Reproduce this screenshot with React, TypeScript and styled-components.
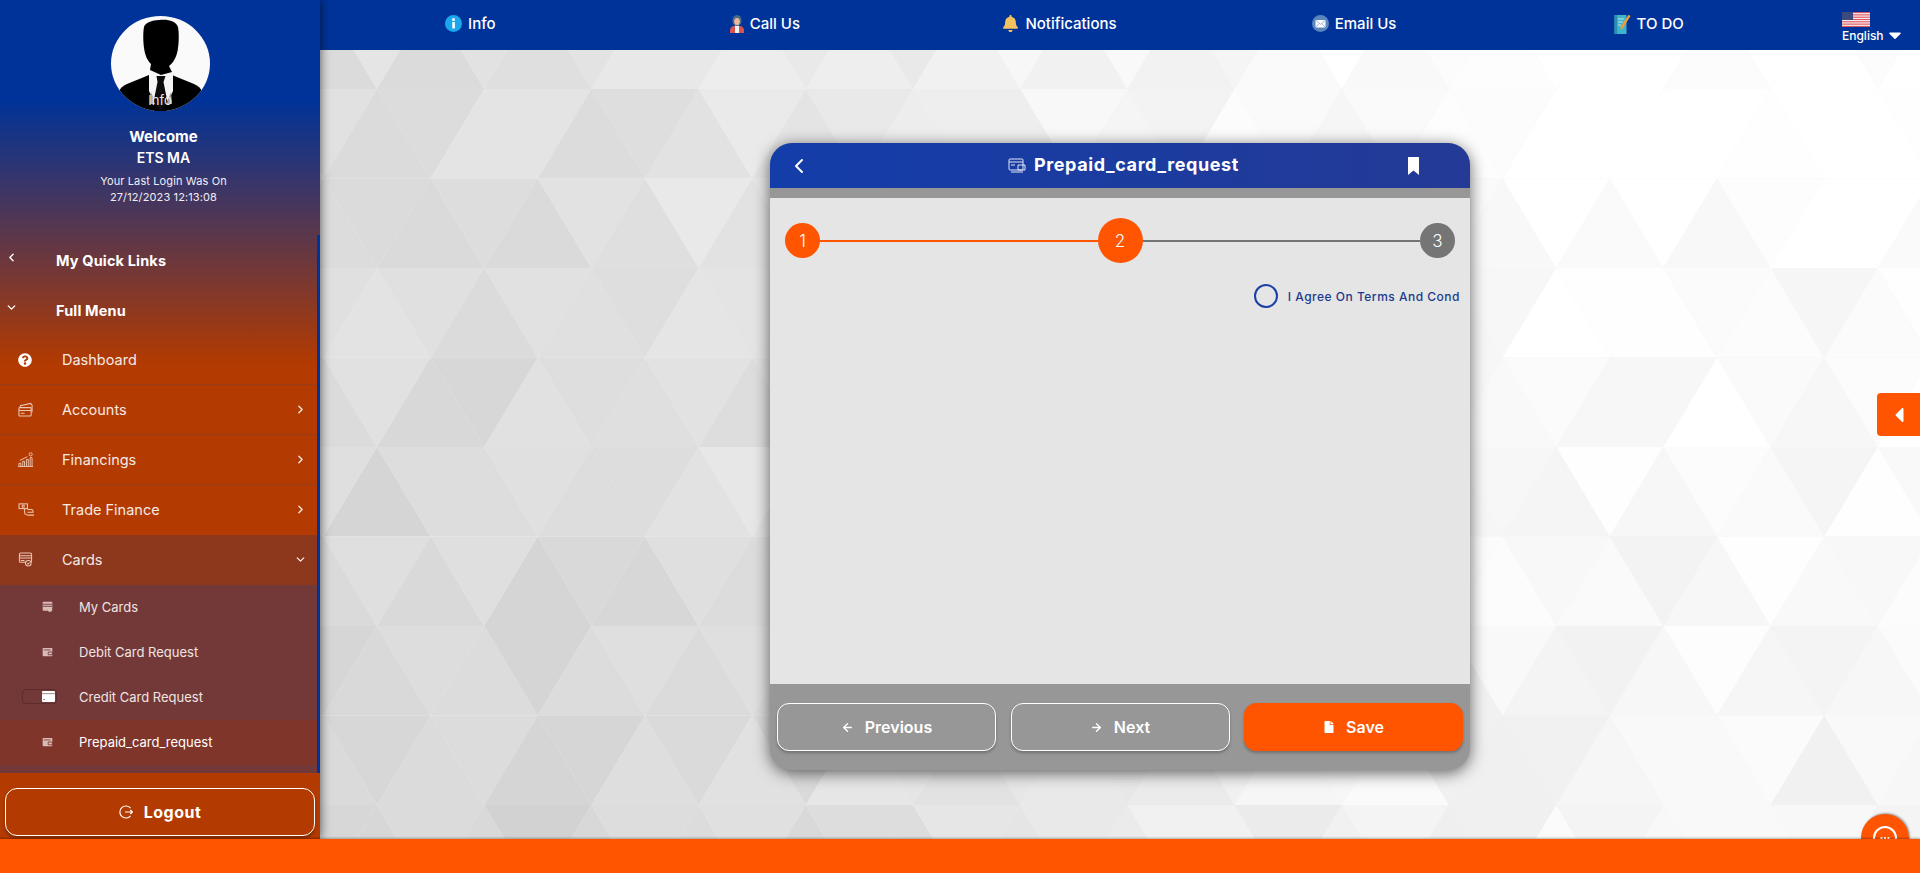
import styled, { createGlobalStyle } from 'styled-components';
import { ChevronLeft, ChevronRight, ChevronDown, ArrowLeft, ArrowRight } from 'lucide-react';
import { FaFile, FaQuestionCircle, FaBell, FaCaretLeft, FaCaretDown } from 'react-icons/fa';

const GlobalStyle = createGlobalStyle`
  html, body { margin: 0; height: 100%; overflow: hidden; }
  body { font-family: Inter, "Open Sans", sans-serif; }
  * { box-sizing: border-box; }
`;

const Page = styled.div`
  width: 1920px;
  height: 873px;
  display: grid;
  grid-template-columns: 320px 1600px;
  grid-template-rows: 839px 34px;
  overflow: hidden;
`;

const Sidebar = styled.aside`
  position: relative;
  z-index: 3;
  display: flex;
  flex-direction: column;
  height: 839px;
  color: #fff;
  background: linear-gradient(180deg, #003399 0, #003399 100px, #b33a00 365px);
  box-shadow: 0 0 10px rgba(0, 0, 0, 0.65);
`;

const Profile = styled.div`
  height: 235px;
  flex: none;
  padding-top: 16px;
  display: flex;
  flex-direction: column;
  align-items: center;
  text-align: center;
`;

const Avatar = styled.div`
  position: relative;
  width: 99px;
  height: 95px;
  border-radius: 50%;
  overflow: hidden;
  background: #fafafa;
`;

const AvatarLabel = styled.span`
  position: absolute;
  left: 0;
  right: 0;
  bottom: 3px;
  font-size: 13px;
  color: #e8e8e8;
`;

const ProfileText = styled.div`
  padding-left: 7px;
`;

const Welcome = styled.div`
  margin-top: 15px;
  font-size: 15px;
  line-height: 21px;
  font-weight: 700;
`;

const Company = styled.div`
  font-size: 14px;
  line-height: 21px;
  font-weight: 600;
`;

const LastLogin = styled.div`
  margin-top: 5px;
  font-size: 11px;
  line-height: 16px;
  letter-spacing: 0.12px;
  color: #f0eef4;
`;

const MenuScroll = styled.div`
  flex: 1;
  min-height: 0;
  overflow: hidden;
  border-right: 3px solid #003399;
  position: relative;
`;

const ScrollThumb = styled.div`
  position: absolute;
  right: -3px;
  top: 453px;
  width: 3px;
  height: 85px;
  background: #e3ab93;
`;

const GroupHead = styled.div`
  height: 50px;
  padding-left: 56px;
  display: flex;
  align-items: center;
  position: relative;
  font-size: 14.5px;
  font-weight: 700;
  letter-spacing: 0.15px;

  svg {
    position: absolute;
    left: 5px;
    top: 16px;
  }
`;

const MenuItem = styled.div<{ $open?: boolean; $rule?: boolean }>`
  height: 50px;
  padding: 0 10px 0 18px;
  display: flex;
  align-items: center;
  font-size: 14.5px;
  color: #f6e9e3;
  background: ${(p) => (p.$open ? '#8d371c' : 'transparent')};
  border-bottom: 1px solid ${(p) => (p.$rule ? '#963d1e' : 'transparent')};
`;

const ItemIcon = styled.span`
  width: 44px;
  flex: none;
  display: flex;
  align-items: center;
  color: #edc7b5;
`;

const ItemLabel = styled.span`
  flex: 1;
`;

const SubMenu = styled.div`
  background: #733838;
  height: 188px;
`;

const SubItem = styled.div<{ $active?: boolean }>`
  height: 45px;
  padding: 0 0 2px 42px;
  display: flex;
  align-items: center;
  font-size: 13px;
  color: ${(p) => (p.$active ? '#fff' : '#f0e4e2')};
  background: ${(p) => (p.$active ? '#80352a' : 'transparent')};
`;

const SubIcon = styled.span`
  width: 37px;
  flex: none;
  display: flex;
  align-items: center;
  color: #d9bcb8;
  position: relative;
`;

const GhostBox = styled.i`
  position: absolute;
  left: -20px;
  top: -2px;
  width: 35px;
  height: 15px;
  border: 1px solid #5f2c2c;
  border-radius: 4px;
`;

const LogoutArea = styled.div`
  height: 66px;
  flex: none;
  padding: 15px 5px 3px;
  background: #b33a00;
`;

const LogoutButton = styled.button`
  width: 310px;
  height: 48px;
  display: flex;
  align-items: center;
  justify-content: center;
  gap: 11px;
  color: #fff;
  font: 700 16px Inter, sans-serif;
  letter-spacing: 0.5px;
  background: #b33a00;
  border: 1px solid #fff;
  border-radius: 12px;
  box-shadow: 0 2px 3px rgba(0, 0, 0, 0.3);
`;

const MainColumn = styled.div`
  display: flex;
  flex-direction: column;
  height: 839px;
  min-width: 0;
`;

const TopBar = styled.header`
  height: 50px;
  flex: none;
  display: grid;
  grid-template-columns: repeat(5, 294.6px) 1fr;
  padding-left: 3px;
  background: #003399;
  color: #fff;
  font-size: 15px;
  font-weight: 500;
`;

const TopLink = styled.div`
  display: flex;
  align-items: center;
  justify-content: center;
  gap: 6px;
  padding-bottom: 3px;
`;

const Language = styled.div`
  padding: 12px 0 0 46px;
  font-size: 12px;
  line-height: 13px;

  span {
    display: flex;
    align-items: center;
    gap: 1px;
    margin-top: -2px;
  }
`;

const Content = styled.main`
  position: relative;
  flex: 1;
  overflow: hidden;
  background: #f2f2f2;
  display: flex;
  justify-content: center;
  padding: 93px 0 0 0;
`;

const Backdrop = styled.svg`
  position: absolute;
  inset: 0;
`;

const Card = styled.section`
  position: relative;
  width: 700px;
  height: 627px;
  display: flex;
  flex-direction: column;
  border-radius: 22px;
  overflow: hidden;
  background: #979797;
  box-shadow: 0 3px 16px rgba(0, 0, 0, 0.6);
`;

const CardHeader = styled.div`
  height: 45px;
  flex: none;
  display: flex;
  align-items: center;
  justify-content: space-between;
  padding: 0 51px 0 17px;
  color: #fff;
  background: linear-gradient(90deg, #133da9, #243a96);
`;

const CardTitle = styled.h1`
  margin: 0 0 2px 28px;
  display: flex;
  align-items: center;
  gap: 8px;
  font-size: 18px;
  font-weight: 700;
  letter-spacing: 0.6px;
`;

const GreyStrip = styled.div`
  height: 10px;
  flex: none;
  background: #979797;
`;

const CardBody = styled.div`
  flex: 1;
  min-height: 0;
  background: #e5e5e5;
  padding: 20px 15px 0;
`;

const Stepper = styled.div`
  height: 45px;
  display: flex;
  align-items: center;
`;

const StepDot = styled.div<{ $size: number; $done: boolean }>`
  width: ${(p) => p.$size}px;
  height: ${(p) => p.$size}px;
  flex: none;
  border-radius: 50%;
  display: flex;
  align-items: center;
  justify-content: center;
  color: #fff;
  font-size: 17px;
  font-weight: 300;
  background: ${(p) => (p.$done ? '#ff5500' : '#757575')};
`;

const StepLine = styled.div<{ $done: boolean }>`
  flex: 1;
  height: 2px;
  background: ${(p) => (p.$done ? '#ff5500' : '#757575')};
`;

const AgreeRow = styled.label`
  margin: 21px -5px 0 0;
  height: 24px;
  display: flex;
  align-items: center;
  justify-content: flex-end;
  gap: 10px;
  font-size: 12px;
  font-weight: 500;
  letter-spacing: 0.5px;
  color: #1c3a8c;
`;

const RadioRing = styled.span`
  width: 24px;
  height: 24px;
  border: 2px solid #1a3fa8;
  border-radius: 50%;
`;

const CardFooter = styled.div`
  height: 86px;
  flex: none;
  display: grid;
  grid-template-columns: repeat(3, 219px);
  column-gap: 14.5px;
  padding: 19px 7px 0;
`;

const FooterButton = styled.button<{ $primary?: boolean }>`
  height: 48px;
  display: flex;
  align-items: center;
  justify-content: center;
  gap: 11px;
  color: #fff;
  font: 600 16px Inter, sans-serif;
  background: ${(p) => (p.$primary ? '#ff5500' : 'transparent')};
  border: 1px solid ${(p) => (p.$primary ? '#ff5500' : '#fff')};
  border-radius: 12px;
  box-shadow: 0 2px 3px rgba(0, 0, 0, 0.25);
`;

const SideTab = styled.div`
  position: absolute;
  right: 0;
  top: 343px;
  width: 43px;
  height: 43px;
  display: flex;
  align-items: center;
  justify-content: center;
  color: #fff;
  background: #ff5500;
  border-radius: 4px 0 0 4px;
  font-size: 24px;
`;

const ChatBubble = styled.div`
  position: absolute;
  left: 1541px;
  top: 764px;
  width: 48px;
  height: 48px;
  display: flex;
  align-items: center;
  justify-content: center;
  background: #ff5500;
  border-radius: 50%;
  box-shadow: 1px -1px 2px rgba(0, 0, 0, 0.35);
`;

const Footer = styled.footer`
  grid-column: 1 / -1;
  position: relative;
  z-index: 4;
  background: #ff5500;
  box-shadow: 0 -1px 2px rgba(0, 0, 0, 0.3);
`;

// triangle lattice behind the card, lighter toward the right
const smooth = (a: number, b: number, x: number) => {
  const t = Math.min(1, Math.max(0, (x - a) / (b - a)));
  return t * t * (3 - 2 * t);
};

const noise = (i: number, j: number) => {
  const s = Math.sin(i * 12.9898 + j * 78.233) * 43758.5453;
  return s - Math.floor(s);
};

const buildTriangles = () => {
  const w = 107.2;
  const h = 89.5;
  const out: { points: string; fill: string }[] = [];
  for (let r = -1; r < 10; r++) {
    const top = 39 + h * (r - 1);
    const shift = r % 2 === 0 ? 3.4 : 57;
    for (let c = -2; c < 17; c++) {
      for (let k = 0; k < 2; k++) {
        const x = shift + c * w;
        const points =
          k === 0
            ? `${x},${top} ${x + w},${top} ${x + w / 2},${top + h}`
            : `${x + w / 2},${top + h} ${x + w},${top} ${x + (3 * w) / 2},${top + h}`;
        const cx = x + (k === 0 ? w / 2 : w);
        const cy = top + h / 2;
        const base = 214 + 31 * smooth(100, 1250, cx) + 11 * (1 - cy / 790);
        const v = Math.min(255, Math.round(base + (noise(r + 3, c * 2 + k + 5) - 0.5) * 12));
        out.push({ points, fill: `rgb(${v},${v},${v})` });
      }
    }
  }
  return out;
};

const triangles = buildTriangles();

const AccountsIcon = () => (
  <svg width="15" height="15" viewBox="0 0 16 16" fill="none" stroke="currentColor" strokeWidth="1.1">
    <rect x="1" y="6" width="13" height="9" rx="1" />
    <path d="M1 9h13M3 12h4M2.500 6V4l11-2.500 1.500 2V11" />
  </svg>
);

const CardsIcon = () => (
  <svg width="15" height="15" viewBox="0 0 16 16" fill="none" stroke="currentColor" strokeWidth="1.1">
    <rect x="1.500" y="1" width="13" height="10" rx="1.500" />
    <path d="M1.500 4h13M1.500 6.500h13M3 9h4" />
    <circle cx="11" cy="12" r="3" fill="#8d371c" />
    <path d="M9.800 12l1 1 1.500-1.800" />
  </svg>
);

const ChartIcon = () => (
  <svg width="15" height="15" viewBox="0 0 16 16" fill="none" stroke="currentColor" strokeWidth="1">
    <path d="M1 15v-3h2v3M5 15v-5h2v5M9 15V8h2v7M13 15V6h2v9M0 15.500h16" />
    <circle cx="13.500" cy="2.500" r="1.700" />
    <path d="M2 9l8-4" />
  </svg>
);

const HandIcon = () => (
  <svg width="17" height="15" viewBox="0 0 18 16" fill="none" stroke="currentColor" strokeWidth="1.1">
    <rect x="1" y="2" width="9" height="5" />
    <circle cx="5.500" cy="4.500" r="1.200" />
    <path d="M7 7v4c0 2 2 3 4 3h6M10 8h4c1 0 2 1 2 2v1h-6" />
  </svg>
);

const PayCardIcon = () => (
  <svg width="11" height="11" viewBox="0 0 16 16" fill="currentColor">
    <path d="M2 1h12a1 1 0 0 1 1 1v9H9a2 2 0 0 0 0 3H2a1 1 0 0 1-1-1V2a1 1 0 0 1 1-1z" />
    <circle cx="11.500" cy="12.500" r="3.500" />
    <rect x="1" y="4" width="14" height="1.300" fill="#733838" />
    <rect x="1" y="7" width="14" height="1.300" fill="#733838" />
  </svg>
);

const WalletCardIcon = ({ bg }: { bg: string }) => (
  <svg width="11" height="10" viewBox="0 0 16 14" fill="currentColor">
    <path d="M2 1h12a1 1 0 0 1 1 1v10a1 1 0 0 1-1 1H2a1 1 0 0 1-1-1V2a1 1 0 0 1 1-1z" />
    <path d="M9 7h6v4H9zM2.500 4h10" stroke={bg} strokeWidth="1.200" fill="none" />
  </svg>
);

const PlainCardIcon = () => (
  <svg width="13" height="11" viewBox="0 0 13 11" style={{ display: 'block' }}>
    <rect width="13" height="11" rx="1" fill="#fff" />
    <rect y="2" width="13" height="1.200" fill="#b89a9a" />
    <rect x="1.500" y="8" width="1.200" height="1" fill="#733838" />
  </svg>
);

const LogoutIcon = () => (
  <svg width="14" height="14" viewBox="0 0 14 14" fill="none" stroke="#fff" strokeWidth="1.2">
    <path d="M11.500 3.200A6 6 0 1 0 11.500 10.800M6 7h7.500M11.300 5l2.200 2-2.200 2" />
  </svg>
);

const InfoBadge = () => (
  <svg width="17" height="17" viewBox="0 0 17 17">
    <circle cx="8.500" cy="8.500" r="8.500" fill="#1aa7ee" />
    <rect x="7.300" y="7" width="2.600" height="6.500" fill="#fff" />
    <circle cx="8.500" cy="4.600" r="1.500" fill="#fff" />
  </svg>
);

const AgentIcon = () => (
  <svg width="14" height="18" viewBox="0 0 14 18">
    <path d="M0 18v-3c0-2 2-4 4-4h6c2 0 4 2 4 4v3z" fill="#d9534f" />
    <rect x="5" y="10" width="4" height="8" fill="#f1f1f1" />
    <ellipse cx="7" cy="5.500" rx="4.600" ry="5.500" fill="#4a6a8a" />
    <ellipse cx="7" cy="6.500" rx="2.800" ry="3.600" fill="#f0b89a" />
  </svg>
);

const MailBadge = () => (
  <svg width="17" height="17" viewBox="0 0 17 17">
    <circle cx="8.500" cy="8.500" r="8.500" fill="#5b86bd" />
    <rect x="3.500" y="5" width="10" height="7.500" rx="0.700" fill="#fff" />
    <path d="M3.800 5.400l4.700 4 4.700-4M3.800 12.200l3.400-3.600M13.200 12.200L9.800 8.600" stroke="#7f9ec6" strokeWidth="0.800" fill="none" />
  </svg>
);

const NotebookIcon = () => (
  <svg width="17" height="20" viewBox="0 0 17 20">
    <rect x="0.500" y="1" width="12" height="19" fill="#3fb4cf" />
    <rect x="0.500" y="1" width="2.600" height="19" fill="#2b8ea8" />
    <path d="M4 5h6M4 8h5M4 11h3" stroke="#cdeef5" strokeWidth="0.900" />
    <path d="M14.500 0.800L16.500 2 9 14l-2.500 1.600.3-3z" fill="#f0a030" />
  </svg>
);

const FlagIcon = () => (
  <svg width="28" height="15" viewBox="0 0 28 15" style={{ display: 'block' }}>
    <rect width="28" height="15" fill="#fff" />
    {[0, 2.3, 4.6, 6.9, 9.2, 11.5, 13.8].map((y) => (
      <rect key={y} y={y} width="28" height="1.200" fill="#d9545f" />
    ))}
    <rect width="11" height="8" fill="#3c4a7d" />
  </svg>
);

const BookmarkIcon = () => (
  <svg width="11" height="18" viewBox="0 0 11 18" fill="#fff">
    <path d="M0 0h11v18l-5.500-4.500L0 18z" />
  </svg>
);

const PersonSilhouette = () => (
  <svg width="99" height="95" viewBox="0 0 99 95" style={{ display: 'block' }}>
    <path d="M8 95V76c1-4 4-6 8-8l22-9h23l22 9c4 2 7 4 8 8v19z" fill="#000" />
    <path d="M38 55h24v20l-6 13H44l-6-13z" fill="#f5f5f5" />
    <path d="M40 76l5 12h-6zM60 76l-5 12h6z" fill="#a8a8a8" />
    <path d="M45.500 60h9l-2 6 4 20-7 8-7-8 4-20z" fill="#0c0c0c" />
    <path d="M33 11c1-4 8-7 15-7 9-1 17 1 19 7 1 5 1 14 0 21-1 8-4 14-9 18l3 6-11 3-11-5 1-6c-4-4-6-9-7-16-1-7-1-16 0-21z" fill="#000" />
  </svg>
);

const subItems = [
  { label: 'My Cards', icon: <PayCardIcon /> },
  { label: 'Debit Card Request', icon: <WalletCardIcon bg="#733838" /> },
  { label: 'Credit Card Request', icon: <PlainCardIcon />, boxed: true },
  { label: 'Prepaid_card_request', icon: <WalletCardIcon bg="#80352a" />, active: true },
];

const App = () => {
  return (
    <>
      <GlobalStyle />
      <Page>
        <Sidebar>
          <Profile>
            <Avatar>
              <PersonSilhouette />
              <AvatarLabel>Info</AvatarLabel>
            </Avatar>
            <ProfileText>
              <Welcome>Welcome</Welcome>
              <Company>ETS MA</Company>
              <LastLogin>
                Your Last Login Was On
                <br />
                27/12/2023 12:13:08
              </LastLogin>
            </ProfileText>
          </Profile>
          <MenuScroll>
            <ScrollThumb />
            <GroupHead>
              <ChevronLeft size={13} strokeWidth={2.5} />
              My Quick Links
            </GroupHead>
            <GroupHead>
              <ChevronDown size={13} strokeWidth={2.5} />
              Full Menu
            </GroupHead>
            <MenuItem $rule>
              <ItemIcon>
                <FaQuestionCircle size={14} color="#fff" />
              </ItemIcon>
              <ItemLabel>Dashboard</ItemLabel>
            </MenuItem>
            <MenuItem $rule>
              <ItemIcon>
                <AccountsIcon />
              </ItemIcon>
              <ItemLabel>Accounts</ItemLabel>
              <ChevronRight size={13} strokeWidth={2.5} />
            </MenuItem>
            <MenuItem $rule>
              <ItemIcon>
                <ChartIcon />
              </ItemIcon>
              <ItemLabel>Financings</ItemLabel>
              <ChevronRight size={13} strokeWidth={2.5} />
            </MenuItem>
            <MenuItem>
              <ItemIcon>
                <HandIcon />
              </ItemIcon>
              <ItemLabel>Trade Finance</ItemLabel>
              <ChevronRight size={13} strokeWidth={2.5} />
            </MenuItem>
            <MenuItem $open>
              <ItemIcon>
                <CardsIcon />
              </ItemIcon>
              <ItemLabel>Cards</ItemLabel>
              <ChevronDown size={13} strokeWidth={2.5} />
            </MenuItem>
            <SubMenu>
              {subItems.map((item) => (
                <SubItem key={item.label} $active={item.active}>
                  <SubIcon>
                    {item.boxed && <GhostBox />}
                    {item.icon}
                  </SubIcon>
                  {item.label}
                </SubItem>
              ))}
            </SubMenu>
          </MenuScroll>
          <LogoutArea>
            <LogoutButton>
              <LogoutIcon />
              Logout
            </LogoutButton>
          </LogoutArea>
        </Sidebar>

        <MainColumn>
          <TopBar>
            <TopLink>
              <InfoBadge />
              Info
            </TopLink>
            <TopLink>
              <AgentIcon />
              Call Us
            </TopLink>
            <TopLink>
              <FaBell size={17} color="#f4c25e" />
              Notifications
            </TopLink>
            <TopLink>
              <MailBadge />
              Email Us
            </TopLink>
            <TopLink>
              <NotebookIcon />
              TO DO
            </TopLink>
            <Language>
              <FlagIcon />
              <span>
                English
                <FaCaretDown size={20} />
              </span>
            </Language>
          </TopBar>

          <Content>
            <Backdrop width="1600" height="789">
              {triangles.map((t) => (
                <polygon key={t.points} points={t.points} fill={t.fill} />
              ))}
            </Backdrop>
            <Card>
              <CardHeader>
                <ChevronLeft size={24} />
                <CardTitle>
                  <svg width="18" height="16" viewBox="0 0 18 16" fill="none" stroke="#dfe6f5" strokeWidth="1">
                    <rect x="1" y="2" width="14" height="11" rx="1" />
                    <path d="M1 5h14M3 8h4M10 8h7v5h-7zM3 15h12" />
                  </svg>
                  Prepaid_card_request
                </CardTitle>
                <BookmarkIcon />
              </CardHeader>
              <GreyStrip />
              <CardBody>
                <Stepper>
                  <StepDot $size={35} $done>1</StepDot>
                  <StepLine $done />
                  <StepDot $size={45} $done>2</StepDot>
                  <StepLine $done={false} />
                  <StepDot $size={35} $done={false}>3</StepDot>
                </Stepper>
                <AgreeRow>
                  <RadioRing />I Agree On Terms And Cond
                </AgreeRow>
              </CardBody>
              <CardFooter>
                <FooterButton>
                  <ArrowLeft size={13} strokeWidth={2.5} />
                  Previous
                </FooterButton>
                <FooterButton>
                  <ArrowRight size={13} strokeWidth={2.5} />
                  Next
                </FooterButton>
                <FooterButton $primary>
                  <FaFile size={12} />
                  Save
                </FooterButton>
              </CardFooter>
            </Card>
            <SideTab>
              <FaCaretLeft />
            </SideTab>
            <ChatBubble>
              <svg width="26" height="26" viewBox="0 0 26 26" fill="none">
                <circle cx="13" cy="13" r="11" stroke="#fff" strokeWidth="2" />
                <path d="M8.500 13h2M12 13h2M15.500 13h2" stroke="#fff" strokeWidth="2" />
              </svg>
            </ChatBubble>
          </Content>
        </MainColumn>
        <Footer />
      </Page>
    </>
  );
};

export default App;
